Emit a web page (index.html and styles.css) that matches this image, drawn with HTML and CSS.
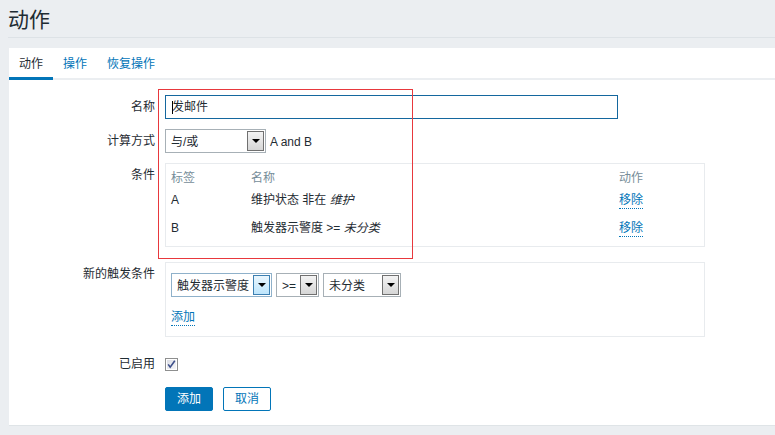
FILE: index.html
```html
<!DOCTYPE html>
<html lang="zh-CN">
<head>
<meta charset="utf-8">
<title>动作</title>
<link rel="stylesheet" href="styles.css">
</head>
<body>
<header class="page-head"><h1 class="page-title">动作</h1></header>
<main class="panel">
  <nav class="tabs">
    <a class="tab active">动作</a>
    <a class="tab">操作</a>
    <a class="tab">恢复操作</a>
  </nav>
  <form class="form">
    <div class="row">
      <div class="label">名称</div>
      <div class="control">
        <div class="text-input"><span class="caret"></span>发邮件</div>
      </div>
    </div>
    <div class="row">
      <div class="label">计算方式</div>
      <div class="control inline">
        <div class="select sel-calc"><span class="select-text">与/或</span><span class="select-btn"><i class="tri"></i></span></div>
        <span class="formula">A and B</span>
      </div>
    </div>
    <div class="row row-gap">
      <div class="label">条件</div>
      <div class="control">
        <div class="box cond-box">
          <div class="cond-head">
            <span>标签</span><span>名称</span><span>动作</span>
          </div>
          <div class="cond-row">
            <span>A</span><span>维护状态 非在 <em>维护</em></span><span><a class="link">移除</a></span>
          </div>
          <div class="cond-row">
            <span>B</span><span>触发器示警度 &gt;= <em>未分类</em></span><span><a class="link">移除</a></span>
          </div>
        </div>
      </div>
    </div>
    <div class="row row-gap">
      <div class="label">新的触发条件</div>
      <div class="control">
        <div class="box new-box">
          <div class="select-group">
            <div class="select hover sel-type"><span class="select-text">触发器示警度</span><span class="select-btn"><i class="tri"></i></span></div>
            <div class="select sel-op"><span class="select-text">&gt;=</span><span class="select-btn"><i class="tri"></i></span></div>
            <div class="select sel-sev"><span class="select-text">未分类</span><span class="select-btn"><i class="tri"></i></span></div>
          </div>
          <div class="add-line"><a class="link">添加</a></div>
        </div>
      </div>
    </div>
    <div class="row row-enabled">
      <div class="label">已启用</div>
      <div class="control check-cell">
        <svg class="checkbox" width="13" height="13" viewBox="0 0 13 13">
          <defs>
            <linearGradient id="cbg" x1="0" y1="0" x2="1" y2="1">
              <stop offset="0" stop-color="#dcdee6"/>
              <stop offset="1" stop-color="#f6f6f8"/>
            </linearGradient>
          </defs>
          <rect x="0.5" y="0.5" width="12" height="12" fill="#fff" stroke="#8e8f8f"/>
          <rect x="2" y="2" width="9" height="9" fill="url(#cbg)"/>
          <path d="M3.2 6.4 L5.2 9.2 L9.8 2.8" fill="none" stroke="#3d4f8a" stroke-width="1.6"/>
        </svg>
      </div>
    </div>
    <div class="row">
      <div class="label"></div>
      <div class="control buttons">
        <button type="button" class="btn btn-primary">添加</button>
        <button type="button" class="btn btn-alt">取消</button>
      </div>
    </div>
  </form>
</main>
<div class="annot"></div>
</body>
</html>
```

FILE: styles.css
```css
html, body {
  margin: 0;
  padding: 0;
  overflow: hidden;
}

body {
  background: #ebeef1;
  color: #1f2c33;
  font-family: "Liberation Sans", "Noto Sans CJK SC", sans-serif;
  font-size: 12px;
  line-height: 14px;
  width: 775px;
  height: 435px;
  position: relative;
}

.page-head {
  margin-left: 8px;
  padding: 8px 0 5px;
  border-bottom: 1px solid #dde2e6;
}

.page-title {
  margin: 0;
  font-size: 21px;
  font-weight: normal;
  line-height: 24px;
  color: #1f2c33;
}

.panel {
  display: block;
  margin: 10px 0 0 9px;
  background: #fff;
  border-bottom: 1px solid #dfe4e7;
}

.tabs {
  display: flex;
  border-bottom: 2px solid #ebeef1;
}

.tab {
  padding: 9px 10px 6px;
  line-height: 14px;
  color: #0275b8;
  border-bottom: 3px solid transparent;
  margin-bottom: -2px;
}

.tab.active {
  color: #1f2c33;
  border-bottom-color: #0275b8;
}

.form {
  padding: 15px 0 14px;
}

.row {
  display: grid;
  grid-template-columns: 146px 1fr;
  column-gap: 10px;
  margin-bottom: 10px;
}

.row:last-child {
  margin-bottom: 0;
}

.row-gap {
  margin-bottom: 15px;
}

.row-enabled {
  margin-bottom: 11px;
}

.label {
  text-align: right;
  line-height: 24px;
}

.control.inline {
  display: flex;
  align-items: flex-start;
  gap: 4px;
}

.text-input {
  box-sizing: border-box;
  width: 453px;
  height: 24px;
  border: 1px solid #14679e;
  padding-left: 6px;
  line-height: 22px;
  position: relative;
}

.caret {
  position: absolute;
  left: 6px;
  top: 5px;
  width: 1px;
  height: 13px;
  background: #000;
}

.select {
  box-sizing: border-box;
  display: flex;
  height: 24px;
  border: 1px solid #a7b0b6;
  background: #fff;
}

.select-text {
  flex: 1;
  padding: 3px 0 0 5px;
  line-height: 19px;
  white-space: nowrap;
  overflow: hidden;
}

.select-btn {
  box-sizing: border-box;
  width: 17px;
  margin: 1px 1px 1px 0;
  border: 1px solid #707070;
  background: linear-gradient(#f3f3f3, #d6d6d6);
  display: flex;
  align-items: center;
  justify-content: center;
}

.tri {
  width: 0;
  height: 0;
  border-left: 4px solid transparent;
  border-right: 4px solid transparent;
  border-top: 4px solid #000;
}

.select.hover {
  border-color: #8fb1ca;
}

.select.hover .select-btn {
  border-color: #3c7fb1;
  background: linear-gradient(#eaf6fd, #bde5fc);
}

.sel-calc { width: 101px; }
.sel-type { width: 101px; }
.sel-op { width: 43px; }
.sel-sev { width: 78px; }

.formula {
  padding-top: 3px;
  line-height: 20px;
}

.box {
  box-sizing: border-box;
  width: 540px;
  border: 1px solid #e8ebee;
  padding: 0 5px;
}

.cond-box {
  padding-top: 4px;
  padding-bottom: 2px;
}

.cond-head,
.cond-row {
  display: grid;
  grid-template-columns: 80px 1fr 80px;
}

.cond-head {
  height: 20px;
  line-height: 20px;
  color: #768d99;
}

.cond-row {
  height: 28px;
  padding-top: 5px;
  box-sizing: border-box;
  line-height: 14px;
}

em {
  font-style: italic;
}

.link {
  color: #0275b8;
  border-bottom: 1px dotted #0275b8;
  padding-bottom: 1px;
  text-decoration: none;
}

.new-box {
  padding-top: 10px;
  padding-bottom: 11px;
}

.select-group {
  display: flex;
  gap: 4px;
}

.add-line {
  margin-top: 12px;
  line-height: 16px;
}

.check-cell {
  display: flex;
  align-items: center;
  height: 24px;
}

.checkbox {
  display: block;
}

.buttons {
  display: flex;
  gap: 10px;
}

.btn {
  box-sizing: border-box;
  width: 48px;
  height: 24px;
  border-radius: 2px;
  font-family: "Liberation Sans", "Noto Sans CJK SC", sans-serif;
  font-size: 12px;
  line-height: 14px;
  padding: 0;
  cursor: pointer;
}

.btn-primary {
  background: #0275b8;
  border: 1px solid #0275b8;
  color: #fff;
}

.btn-alt {
  background: #fff;
  border: 1px solid #0275b8;
  color: #0275b8;
}

.annot {
  position: absolute;
  left: 158px;
  top: 89px;
  width: 255px;
  height: 170px;
  box-sizing: border-box;
  border: 1px solid #e8383d;
  pointer-events: none;
}
```
